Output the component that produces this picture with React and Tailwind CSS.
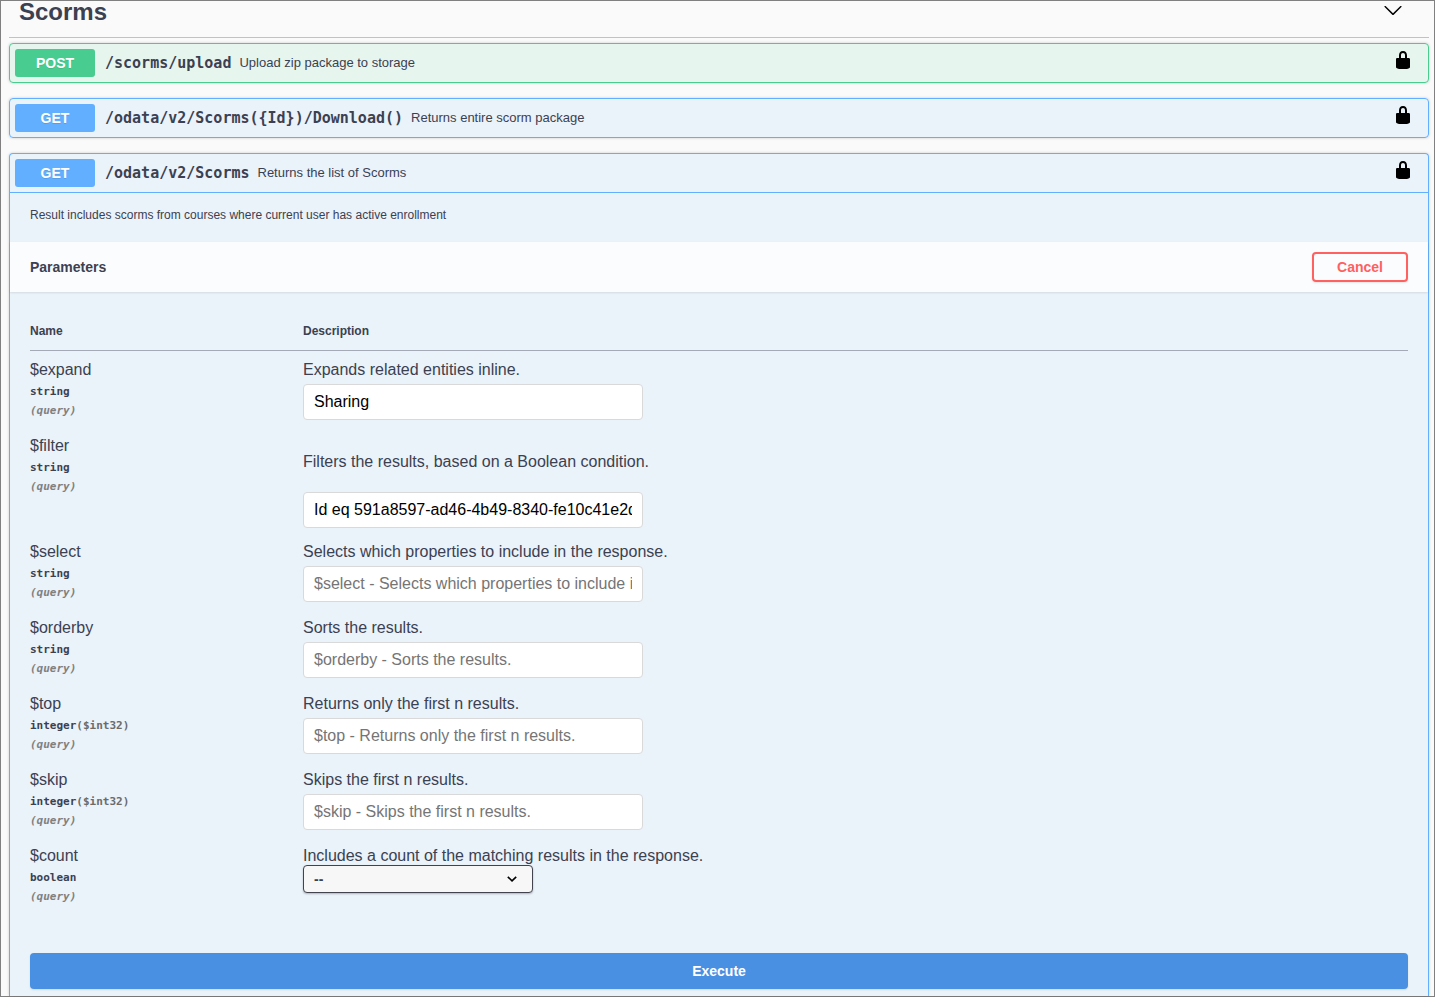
import React from "react";

const PARAMETERS = [
  { name: "$expand", type: "string", description: "Expands related entities inline.", value: "Sharing" },
  {
    name: "$filter",
    type: "string",
    description: "Filters the results, based on a Boolean condition.",
    value: "Id eq 591a8597-ad46-4b49-8340-fe10c41e2d3b",
    paragraph: true,
  },
  { name: "$select", type: "string", description: "Selects which properties to include in the response." },
  { name: "$orderby", type: "string", description: "Sorts the results." },
  { name: "$top", type: "integer", format: "($int32)", description: "Returns only the first n results." },
  { name: "$skip", type: "integer", format: "($int32)", description: "Skips the first n results." },
  { name: "$count", type: "boolean", description: "Includes a count of the matching results in the response." },
];

function LockIcon() {
  return (
    <svg viewBox="0 0 20 20" className="size-5" fill="black" aria-hidden="true">
      <path d="M15.8 8H14V5.6C14 2.703 12.665 1 10 1 7.334 1 6 2.703 6 5.6V8H4c-.553 0-1 .646-1 1.199V17c0 .549.428 1.139.951 1.307l1.197.387C5.672 18.861 6.55 19 7.1 19h5.8c.549 0 1.428-.139 1.951-.307l1.196-.387c.524-.167.953-.757.953-1.306V9.199C17 8.646 16.352 8 15.8 8zM12 8H8V5.199C8 3.754 8.797 3 10 3c1.203 0 2 .754 2 2.199V8z" />
    </svg>
  );
}

function ChevronIcon() {
  return (
    <svg viewBox="0 1 20 20" className="size-5" fill="black" aria-hidden="true">
      <path d="M17.418 6.109c.272-.268.709-.268.979 0s.271.701 0 .969l-7.908 7.83c-.27.268-.707.268-.979 0l-7.908-7.83c-.27-.268-.27-.701 0-.969.271-.268.709-.268.979 0L10 13.25l7.418-7.141z" />
    </svg>
  );
}

function Summary({ method, path, text }) {
  const color = method === "POST" ? "bg-[#49cc90]" : "bg-[#61affe]";
  return (
    <div className="flex items-center p-[5px]">
      <button
        type="button"
        className={`h-7 w-20 shrink-0 rounded-[3px] text-center text-sm font-bold text-white [text-shadow:0_1px_0_rgba(0,0,0,0.1)] ${color}`}
      >
        {method}
      </button>
      <a href="#operation" className="ml-[10px] font-[DejaVu_Sans_Mono,monospace] text-[15px] leading-5 font-bold">
        {path}
      </a>
      <span className="ml-2 flex-1 text-[13px] leading-5">{text}</span>
      <button type="button" aria-label="Authorize" className="mr-[10px] mb-[7px]">
        <LockIcon />
      </button>
    </div>
  );
}

function ParameterRow({ param }) {
  const id = `param-${param.name.slice(1)}`;
  return (
    <tr className="align-top">
      <td className="pt-[9px] pb-[7px]">
        <label htmlFor={id} className="block text-base leading-[19px]">
          {param.name}
        </label>
        <div className="mt-[3px] font-[DejaVu_Sans_Mono,monospace] text-[11px] leading-[19px] font-bold">
          {param.type}
          {param.format && <span className="text-[#6b6b6b]">{param.format}</span>}
        </div>
        <div className="font-[DejaVu_Sans_Mono,monospace] text-[11px] leading-[19px] font-bold text-[#808080] italic">
          (query)
        </div>
      </td>
      <td className="pt-[9px] pb-[5px]">
        <p className={`text-base leading-[19px] ${param.paragraph ? "mt-4 mb-[21px]" : ""}`}>{param.description}</p>
        {param.type === "boolean" ? (
          <div className="relative w-[230px]">
            <select
              id={id}
              className="block h-7 w-full appearance-none rounded-sm border border-[#41444e] bg-[#f7f7f7] pr-10 pl-[10px] text-sm leading-5 font-bold shadow-[0_1px_2px_rgba(0,0,0,0.25)]"
            >
              <option>--</option>
              <option>true</option>
              <option>false</option>
            </select>
            <svg viewBox="0 0 10 6" className="pointer-events-none absolute top-[11px] right-4 h-[6px] w-[10px]" fill="none" aria-hidden="true">
              <path d="M0.8 0.8L5 4.8L9.2 0.8" stroke="black" strokeWidth="1.6" />
            </svg>
          </div>
        ) : (
          <input
            id={id}
            type="text"
            defaultValue={param.value}
            placeholder={`${param.name} - ${param.description}`}
            className="mt-[5px] block h-9 w-[340px] rounded-sm border border-[#d9d9d9] bg-white px-[10px] text-base text-black placeholder:text-[#757575]"
          />
        )}
      </td>
    </tr>
  );
}

export default function App() {
  return (
    <main className="min-h-screen border border-[#808080] bg-[#fafafa] pr-[5px] pl-2 font-[Liberation_Sans,Arial,sans-serif] text-[#3b4151]">
      <header className="flex items-start justify-between border-b border-[#3b4151]/30 pr-[26px] pb-[14px] pl-[10px]">
        <h3 className="text-2xl leading-[22px] font-bold">Scorms</h3>
        <button type="button" aria-label="Collapse operation">
          <ChevronIcon />
        </button>
      </header>

      <div className="flex flex-col gap-[15px] pt-[5px]">
        <section className="rounded-sm border border-[#49cc90] bg-[#49cc90]/10 shadow-[0_0_3px_rgba(0,0,0,0.19)]">
          <Summary method="POST" path="/scorms/upload" text="Upload zip package to storage" />
        </section>

        <section className="rounded-sm border border-[#61affe] bg-[#61affe]/10 shadow-[0_0_3px_rgba(0,0,0,0.19)]">
          <Summary method="GET" path="/odata/v2/Scorms({Id})/Download()" text="Returns entire scorm package" />
        </section>

        <section className="rounded-t-sm border border-b-0 border-[#61affe] bg-[#61affe]/10 shadow-[0_0_3px_rgba(0,0,0,0.19)]">
          <div className="border-b border-[#61affe]">
            <Summary method="GET" path="/odata/v2/Scorms" text="Returns the list of Scorms" />
          </div>

          <p className="px-5 pt-[14px] pb-[19px] text-xs leading-4">
            Result includes scorms from courses where current user has active enrollment
          </p>

          <div className="flex items-center justify-between bg-white/80 px-5 py-[10px] shadow-[0_1px_2px_rgba(0,0,0,0.1)]">
            <h4 className="text-sm font-bold">Parameters</h4>
            <button
              type="button"
              className="h-[30px] w-24 rounded-sm border-2 border-[#ff6060] text-sm leading-5 font-bold text-[#ff6060] shadow-[0_1px_2px_rgba(0,0,0,0.1)]"
            >
              Cancel
            </button>
          </div>

          <div className="px-5 pt-5 pb-[7px]">
            <table className="w-full table-fixed border-separate border-spacing-0 text-left">
              <thead>
                <tr className="text-xs leading-4">
                  <th className="w-[273px] border-b border-[#3b4151]/40 pt-[11px] pb-[11px] font-bold">Name</th>
                  <th className="border-b border-[#3b4151]/40 pt-[11px] pb-[11px] font-bold">Description</th>
                </tr>
              </thead>
              <tbody>
                {PARAMETERS.map((param) => (
                  <ParameterRow key={param.name} param={param} />
                ))}
              </tbody>
            </table>
            <button
              type="button"
              className="mt-10 block h-9 w-full rounded-sm bg-[#4990e2] text-sm font-bold text-white shadow-[0_1px_2px_rgba(0,0,0,0.1)]"
            >
              Execute
            </button>
          </div>
        </section>
      </div>
    </main>
  );
}
